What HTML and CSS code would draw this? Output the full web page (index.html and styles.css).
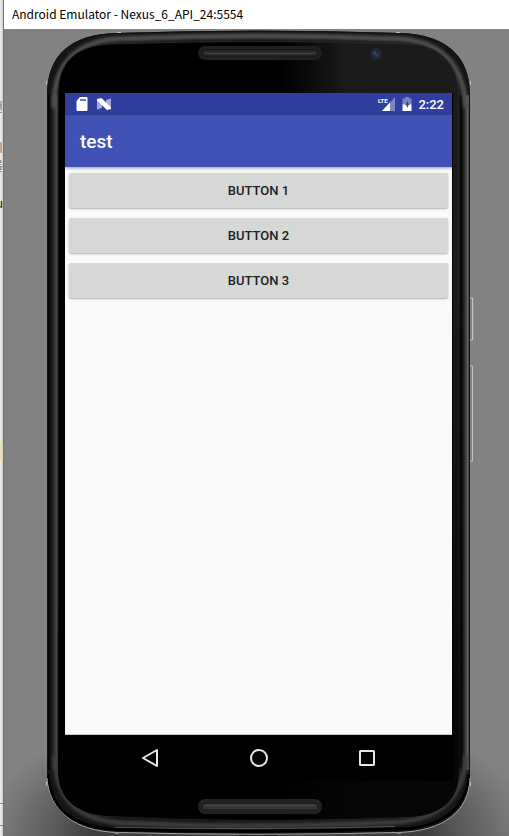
FILE: index.html
```html
<!DOCTYPE html>
<html lang="en">
<head>
<meta charset="utf-8">
<title>Android Emulator - Nexus_6_API_24:5554</title>
<link rel="stylesheet" href="styles.css">
</head>
<body>
<aside class="backdrop" aria-hidden="true">
  <span class="fragment fragment-a">현</span>
  <span class="fragment fragment-b">시</span>
  <span class="fragment fragment-c">를</span>
  <span class="fragment fragment-d">u</span>
  <span class="mark"></span>
  <span class="rule rule-a"></span>
  <span class="rule rule-b"></span>
</aside>
<div class="window">
  <header class="titlebar">Android Emulator - Nexus_6_API_24:5554</header>
  <main class="stage">
    <svg class="device" viewBox="4 29 505 807" preserveAspectRatio="none" aria-hidden="true">
      <defs>
        <linearGradient id="rimL" x1="47" x2="58" y1="0" y2="0" gradientUnits="userSpaceOnUse">
          <stop offset="0" stop-color="#000"/><stop offset=".25" stop-color="#0c0c0c"/><stop offset=".6" stop-color="#292929"/><stop offset=".85" stop-color="#484848"/><stop offset="1" stop-color="#2a2a2a"/>
        </linearGradient>
        <linearGradient id="rimR" x1="458" x2="470" y1="0" y2="0" gradientUnits="userSpaceOnUse">
          <stop offset="0" stop-color="#000"/><stop offset=".3" stop-color="#080808"/><stop offset=".55" stop-color="#2c2c2c"/><stop offset=".8" stop-color="#5c5c5c"/><stop offset="1" stop-color="#3a3a3a"/>
        </linearGradient>
        <linearGradient id="face" x1="58" x2="460" y1="0" y2="0" gradientUnits="userSpaceOnUse">
          <stop offset="0" stop-color="#000"/><stop offset=".55" stop-color="#000"/><stop offset=".72" stop-color="#1a1a1a"/><stop offset="1" stop-color="#1a1c1b"/>
        </linearGradient>
        <linearGradient id="fade" x1="0" x2="0" y1="300" y2="740" gradientUnits="userSpaceOnUse">
          <stop offset="0" stop-color="#000" stop-opacity="0"/><stop offset="1" stop-color="#000" stop-opacity=".8"/>
        </linearGradient>
        <radialGradient id="shade">
          <stop offset=".6" stop-color="#222" stop-opacity=".7"/><stop offset="1" stop-color="#444" stop-opacity="0"/>
        </radialGradient>
        <filter id="soft" x="-20%" y="-20%" width="140%" height="140%"><feGaussianBlur stdDeviation="1.6"/></filter>
        <clipPath id="outer"><path d="M47 95C47 54 72 34 116 33Q258 28 401 33C445 35 470 55 470 95V775C470 812 442 831 399 832Q258 836 117 832C73 830 47 812 47 775Z"/></clipPath>
      </defs>
      <path fill="#828282" d="M4 29h505v807H4z"/>
      <ellipse cx="258" cy="840" rx="280" ry="140" fill="url(#shade)"/>
      <path fill="none" stroke="#c4c4c4" d="M470 298h2.500v42h-2.500M470 366h2.500v95h-2.500"/>
      <path stroke="#999" stroke-dasharray="1 1" d="M473.500 298v42"/>
      <g clip-path="url(#outer)">
        <path fill="#151515" d="M47 29h424v807H47z"/>
        <path fill="url(#rimL)" d="M47 95h30v675H47z"/>
        <path fill="url(#rimR)" d="M440 95h30v675h-30z"/>
        <path fill="none" stroke="#505050" stroke-width="5" filter="url(#soft)" d="M54 108C53 62 78 42 116 39Q258 33 401 39C439 42 463 61 466 108"/>
        <path fill="none" stroke="#3c3c3c" stroke-width="5" filter="url(#soft)" d="M55 755C55 802 80 820 122 823Q258 829 400 822C438 819 464 798 466 755"/>
        <path fill="none" stroke="#555" d="M115 827.500Q258 830 395 826.500"/>
        <path fill="none" stroke="#000" stroke-width="3" d="M48 774C50 809 74 828 117 829.500Q258 833 399 829C440 828 467 810 469 774"/>
      </g>
      <path fill="none" stroke="#111" d="M47.500 775V95C47.500 54 72 35 116 33.500Q258 29 401 33.500C445 35 469.500 55 469.500 95V775"/>
      <path fill="none" stroke="#a2a2a2" d="M47 778C49 812 76 831 117 832.500Q258 836 399 832.500C443 831 469 812 470 778"/>
      <path fill="url(#face)" stroke="#303030" stroke-width=".8" d="M58 95C58 62 75 46 110 44Q258 39 412 44C440 46 459 64 459 97V772C459 801 440 815 411 817Q258 824 105 816C76 813 58 799 58 770Z"/>
      <path fill="url(#fade)" d="M58 300H459V772C459 801 440 815 411 817Q258 824 105 816C76 813 58 799 58 770Z"/>
      <path fill="#000" d="M452 93h1v642h1v46H65v-20h387z"/>
      <g>
        <rect x="198" y="46" width="124" height="14" rx="7" fill="#202020"/>
        <rect x="202" y="50" width="116" height="6" rx="3" fill="#2c2c2c" stroke="#131313"/>
        <path stroke="#444" d="M205 53.500h110"/>
        <rect x="198" y="799" width="124" height="15" rx="7" fill="#222"/>
        <rect x="202" y="803" width="116" height="7" rx="3" fill="#353535" stroke="#151515"/>
        <path stroke="#484848" d="M205 805.500h110"/>
      </g>
      <circle cx="376" cy="54" r="6.500" fill="#242526"/>
      <circle cx="376" cy="54" r="4.500" fill="#1f273c"/>
      <circle cx="374.500" cy="53" r="1.500" fill="#3c4c70"/>
      <circle cx="377" cy="55" r="2" fill="#2e3d62"/>
      <path stroke="#bbb" d="M117 32.500h4M396 32.500h4M46.500 81v4M470.500 81v4M46.500 782v4M470.500 782v4"/>
      <path stroke="#888" stroke-width="2" d="M115 833h4M397 833h4"/>
      <path stroke="#222" d="M239 835.500h39"/>
    </svg>
    <section class="screen">
      <div class="statusbar">
        <svg class="icon-sd" viewBox="0 0 12 14" aria-hidden="true"><path fill="#fff" d="M4 0h6.500q1 0 1 1v12q0 1-1 1H1.500q-1 0-1-1V4z"/><path fill="#6c76ba" d="M4 2h6v2H4z"/></svg>
        <svg class="icon-n" viewBox="0 0 14 12" aria-hidden="true"><path fill="#a5abd7" d="M0 1h5v9l-5 1.500zM14 .5V11H9V2z"/><path fill="#fff" d="M0 1l4.500-1L14 9.500V11l-4 1L0 2.500z"/></svg>
        <svg class="icon-signal" viewBox="0 0 18 14" role="img" aria-label="LTE signal"><path fill="#7d86c4" d="M17 0v14H4z"/><path fill="#303f9f" d="M0 0h10v6H0z"/><path fill="#fff" d="M12 5.500V14H4z"/><text class="lte" x="0" y="6">LTE</text></svg>
        <svg class="icon-battery" viewBox="0 0 10 14" aria-hidden="true"><path fill="#7d86c4" d="M3 0h4v1.500h2.500V8h-9V1.500H3z"/><path fill="#fff" d="M.5 7.500h9V14h-9z"/><path fill="#303f9f" d="M6 3.500L3.200 8.500H5V11.500l2.300-5H6z"/></svg>
        <time>2:22</time>
      </div>
      <h1 class="appbar">test</h1>
      <div class="content">
        <button class="btn" type="button">BUTTON 1</button>
        <button class="btn" type="button">BUTTON 2</button>
        <button class="btn" type="button">BUTTON 3</button>
      </div>
      <nav class="navbar">
        <button type="button" aria-label="Back"><svg viewBox="0 0 20 20"><path d="M16 2v16L2 10z"/></svg></button>
        <button type="button" aria-label="Home"><svg viewBox="0 0 20 20"><circle cx="10" cy="10" r="8"/></svg></button>
        <button type="button" aria-label="Overview"><svg viewBox="0 0 20 20"><rect x="3" y="3" width="14" height="14" rx=".5"/></svg></button>
      </nav>
    </section>
  </main>
</div>
</body>
</html>
```
FILE: styles.css
```css
* { box-sizing: border-box; }

body {
  margin: 0;
  min-height: 100vh;
  display: flex;
  overflow: hidden;
  background: #828282;
  font-family: Roboto, "Liberation Sans", sans-serif;
}

.backdrop {
  position: relative;
  flex: 0 0 4px;
  overflow: hidden;
  background: linear-gradient(90deg, #f0f0f0, #cfcfcf);
  border-right: 1px solid #3c7fb1;
}

.fragment {
  position: absolute;
  right: 0;
  font: 12px/16px "Noto Sans CJK KR", sans-serif;
  color: #777;
}
.fragment-a { top: 99px; }
.fragment-b { top: 139px; }
.fragment-c { top: 158px; }
.fragment-d { top: 195px; color: #111; }

.mark {
  position: absolute;
  top: 442px;
  width: 3px;
  height: 19px;
  background: #e8deb5;
}

.rule {
  position: absolute;
  width: 3px;
  height: 1px;
  background: #888;
}
.rule-a { top: 803px; }
.rule-b { top: 825px; }

.window {
  flex: 1;
  min-width: 0;
  display: flex;
  flex-direction: column;
}

.titlebar {
  height: 29px;
  padding: 0 8px;
  background: #fff;
  color: #000;
  font: 12px/27px "Noto Sans CJK KR", "Noto Sans", sans-serif;
  white-space: nowrap;
}

.stage {
  position: relative;
  flex: 1;
  display: flex;
  padding: 64px 57px 56px 61px;
}

.device {
  position: absolute;
  inset: 0;
  width: 100%;
  height: 100%;
}

.screen {
  position: relative;
  flex: 1;
  display: flex;
  flex-direction: column;
  background: #fafafa;
}

.statusbar {
  height: 22px;
  display: flex;
  align-items: center;
  padding: 0 8px 0 11px;
  background: #303f9f;
  color: #fff;
  font-size: 13px;
  font-weight: 500;
}
.icon-sd { width: 12px; height: 14px; }
.icon-n { width: 14px; height: 12px; margin-left: 9px; }
.icon-signal { width: 18px; height: 14px; margin-left: auto; }
.icon-battery { width: 10px; height: 14px; margin: 0 6px; }
.lte { font: 700 6px Roboto, sans-serif; fill: #fff; }

.appbar {
  position: relative;
  margin: 0;
  height: 52px;
  padding-left: 15px;
  background: #3f51b5;
  color: #fff;
  font-size: 19px;
  font-weight: 500;
  line-height: 54px;
  box-shadow: 0 1px 3px rgba(0, 0, 0, .4);
}

.content {
  flex: 1;
  display: flex;
  flex-direction: column;
  gap: 10px;
  padding: 6px 4px;
  border-bottom: 1px solid #c8c8c8;
}

.btn {
  height: 35px;
  padding: 0;
  border: 0;
  border-radius: 2px;
  background: #d6d7d7;
  box-shadow: 0 1px 2px rgba(0, 0, 0, .3);
  color: #212121;
  font: 500 13px/35px Roboto, sans-serif;
}

.navbar {
  height: 45px;
  display: flex;
  justify-content: center;
  gap: 88px;
  align-items: center;
  background: #000;
}
.navbar button {
  width: 20px;
  height: 20px;
  padding: 0;
  border: 0;
  background: none;
}
.navbar svg {
  display: block;
  width: 20px;
  height: 20px;
  fill: none;
  stroke: #e6e6e6;
  stroke-width: 2;
  stroke-linejoin: round;
}
```
